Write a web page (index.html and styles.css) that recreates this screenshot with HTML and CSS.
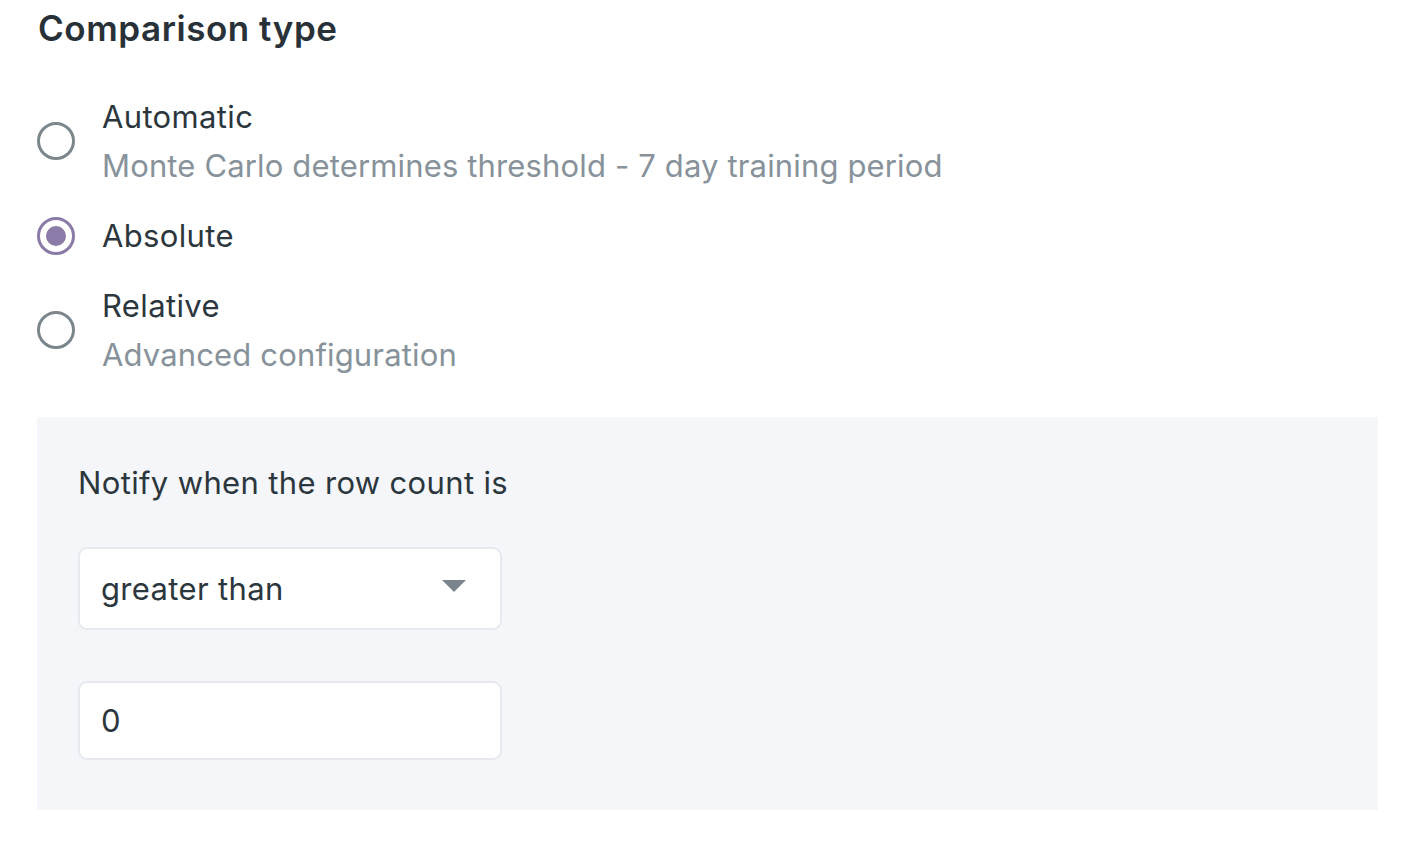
FILE: index.html
```html
<!DOCTYPE html>
<html>
<head>
<meta charset="utf-8">
<link rel="stylesheet" href="styles.css">
</head>
<body>
<div class="page">
  <h2 class="title">Comparison type</h2>
  <div class="radios">
    <div class="radio-row">
      <span class="radio"></span>
      <div class="radio-text">
        <div class="label">Automatic</div>
        <div class="sub">Monte Carlo determines threshold - 7 day training period</div>
      </div>
    </div>
    <div class="radio-row">
      <span class="radio checked"></span>
      <div class="radio-text">
        <div class="label">Absolute</div>
      </div>
    </div>
    <div class="radio-row">
      <span class="radio"></span>
      <div class="radio-text">
        <div class="label">Relative</div>
        <div class="sub">Advanced configuration</div>
      </div>
    </div>
  </div>
  <div class="panel">
    <div class="panel-label">Notify when the row count is</div>
    <div class="select">
      <span>greater than</span>
      <span class="caret"></span>
    </div>
    <div class="input">0</div>
  </div>
</div>
</body>
</html>
```
FILE: styles.css
```css
html, body {
  margin: 0;
  padding: 0;
  background: #ffffff;
}
body {
  font-family: Inter, "Noto Sans", sans-serif;
  color: #2e383f;
}
.page {
  padding: 0 34px 0 37px;
}
.title {
  margin: 0;
  padding-top: 7px;
  font-size: 35px;
  line-height: 42px;
  font-weight: 600;
  color: #283137;
  padding-left: 1px;
  letter-spacing: 0.55px;
}
.radios {
  display: flex;
  flex-direction: column;
  gap: 21px;
  margin-top: 43px;
}
.radio-row {
  display: flex;
  align-items: center;
}
.radio {
  box-sizing: border-box;
  width: 38px;
  height: 38px;
  border-radius: 50%;
  border: 3px solid #7c868d;
  margin-right: 27px;
  flex: none;
  display: flex;
  align-items: center;
  justify-content: center;
}
.radio.checked {
  border-color: #8b7ba8;
}
.radio.checked::after {
  content: "";
  width: 20px;
  height: 20px;
  border-radius: 50%;
  background: #8b7ba8;
}
.label, .sub, .panel-label, .select, .input {
  font-size: 31px;
  letter-spacing: 0.35px;
}
.label {
  line-height: 49px;
  color: #2c363d;
}
.sub {
  line-height: 49px;
  color: #87929a;
  letter-spacing: 0.15px;
}
.panel {
  margin-top: 38px;
  background: #f4f6fa;
  padding: 41px 41px 50px 41px;
}
.panel-label {
  line-height: 49px;
  color: #2c363d;
}
.select, .input {
  box-sizing: border-box;
  width: 424px;
  background: #ffffff;
  border: 2px solid #e6e9ee;
  border-radius: 9px;
  color: #2c363d;
  padding-left: 21px;
  display: flex;
  align-items: center;
}
.select {
  margin-top: 40px;
  height: 83px;
  justify-content: space-between;
  padding-right: 34px;
}
.caret {
  width: 0;
  height: 0;
  border-left: 12px solid transparent;
  border-right: 12px solid transparent;
  border-top: 12px solid #7b848c;
  margin-top: -6px;
}
.input {
  margin-top: 51px;
  height: 79px;
}
```
